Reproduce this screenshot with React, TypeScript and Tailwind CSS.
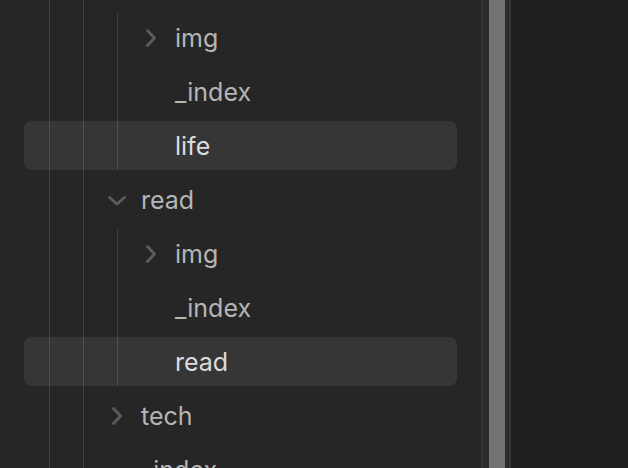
import React from 'react';

type Item = {
  name: string;
  folder?: boolean;
  open?: boolean;
  active?: boolean;
};

const Chevron = ({ open }: { open?: boolean }) => (
  <svg width="24" height="24" viewBox="0 0 24 24" fill="none" stroke="#5c5c5c" strokeWidth="2.8" strokeLinecap="round" strokeLinejoin="round">
    {open ? <polyline points="4.5,9.5 12,16 19.5,9.5" /> : <polyline points="8.5,4.5 15.5,12 8.5,19.5" />}
  </svg>
);

// deep rows sit inside three guide containers, shallow rows inside two
const Row = ({ item, deep }: { item: Item; deep?: boolean }) => (
  <div
    className={
      'h-[49px] shrink-0 flex items-center rounded-lg ' +
      (deep ? '-ml-[94px] pl-[115px] ' : '-ml-[60px] pl-[81px] ') +
      (item.active ? 'bg-white/[0.075] text-[#dcdcdc]' : 'text-[#b5b5b5]')
    }
  >
    <div className="w-6 h-6 flex items-center justify-center">
      {item.folder && <Chevron open={item.open} />}
    </div>
    <span className="ml-3 pt-[2px] leading-none">{item.name}</span>
  </div>
);

const lifeChildren: Item[] = [
  { name: 'img', folder: true },
  { name: '_index' },
  { name: 'life', active: true },
];

const readChildren: Item[] = [
  { name: 'img', folder: true },
  { name: '_index' },
  { name: 'read', active: true },
];

export default function App() {
  return (
    <div className="flex h-[468px] w-[628px] overflow-hidden bg-[#202020] font-['Inter','Noto_Sans',sans-serif] text-[25px]">
      <div className="w-[481px] shrink-0 bg-[#262626] px-6 overflow-hidden">
        <div className="-mt-[41px] ml-[25px] border-l border-[#414141] min-h-[560px]">
          <div className="ml-[33px] border-l border-[#414141] flex flex-col gap-[5px] min-h-[560px]">
            <Row item={{ name: 'life', folder: true, open: true }} />
            <div className="ml-[33px] border-l border-[#414141] flex flex-col gap-[5px]">
              {lifeChildren.map((it, i) => (
                <Row key={i} item={it} deep />
              ))}
            </div>
            <Row item={{ name: 'read', folder: true, open: true }} />
            <div className="ml-[33px] border-l border-[#414141] flex flex-col gap-[5px]">
              {readChildren.map((it, i) => (
                <Row key={i} item={it} deep />
              ))}
            </div>
            <Row item={{ name: 'tech', folder: true }} />
            <Row item={{ name: '_index' }} />
          </div>
        </div>
      </div>
      <div className="w-[2px] shrink-0 bg-[#363636]" />
      <div className="w-[26px] shrink-0 bg-[#2c2c2c] pl-[6px]">
        <div className="w-[16px] h-full bg-[#737373]" />
      </div>
      <div className="w-[2px] shrink-0 bg-[#363636]" />
      <div className="flex-1 bg-[#202020]" />
    </div>
  );
}
